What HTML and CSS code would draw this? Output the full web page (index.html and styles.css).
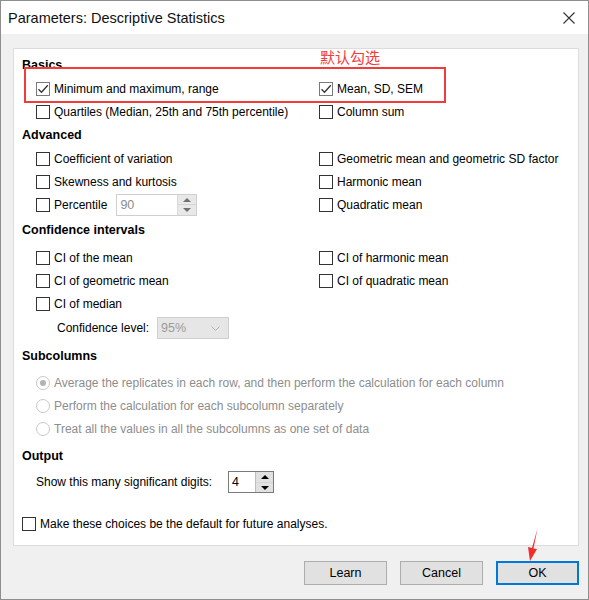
FILE: index.html
```html
<!DOCTYPE html>
<html>
<head>
<meta charset="utf-8">
<link rel="stylesheet" href="styles.css">
</head>
<body>
<div class="window">
  <div class="titlebar">
    <span class="title">Parameters: Descriptive Statistics</span>
    <svg class="close" width="12" height="12" viewBox="0 0 12 12"><path d="M0.5 0.5 L11.5 11.5 M11.5 0.5 L0.5 11.5" stroke="#333" stroke-width="1.1" fill="none"/></svg>
  </div>
  <div class="body">
    <div class="panel">
      <div class="heading h-basics">Basics</div>
      <div class="grid">
        <label class="row"><span class="cb checked"><svg width="12" height="12" viewBox="0 0 12 12"><path d="M1.5 6.2 L4.5 9.2 L10.8 2.2" stroke="#333" stroke-width="1.3" fill="none"/></svg></span>Minimum and maximum, range</label>
        <label class="row"><span class="cb checked"><svg width="12" height="12" viewBox="0 0 12 12"><path d="M1.5 6.2 L4.5 9.2 L10.8 2.2" stroke="#333" stroke-width="1.3" fill="none"/></svg></span>Mean, SD, SEM</label>
        <label class="row"><span class="cb"></span>Quartiles (Median, 25th and 75th percentile)</label>
        <label class="row"><span class="cb"></span>Column sum</label>
      </div>
      <div class="heading">Advanced</div>
      <div class="grid">
        <label class="row"><span class="cb"></span>Coefficient of variation</label>
        <label class="row"><span class="cb"></span>Geometric mean and geometric SD factor</label>
        <label class="row"><span class="cb"></span>Skewness and kurtosis</label>
        <label class="row"><span class="cb"></span>Harmonic mean</label>
        <div class="row"><span class="cb"></span>Percentile
          <div class="spin spin-pct disabled"><span class="val">90</span><span class="arrows"><span class="up"></span><span class="down"></span></span></div>
        </div>
        <label class="row"><span class="cb"></span>Quadratic mean</label>
      </div>
      <div class="heading h-ci">Confidence intervals</div>
      <div class="grid g-ci">
        <label class="row"><span class="cb"></span>CI of the mean</label>
        <label class="row"><span class="cb"></span>CI of harmonic mean</label>
        <label class="row"><span class="cb"></span>CI of geometric mean</label>
        <label class="row"><span class="cb"></span>CI of quadratic mean</label>
        <label class="row"><span class="cb"></span>CI of median</label>
        <div></div>
      </div>
      <div class="conf-row">
        <span>Confidence level:</span>
        <div class="select"><span>95%</span><svg width="9" height="5" viewBox="0 0 9 5"><path d="M0.5 0.5 L4.5 4.5 L8.5 0.5" stroke="#b5b5b5" fill="none"/></svg></div>
      </div>
      <div class="heading h-sub">Subcolumns</div>
      <div class="radios">
        <div class="row dim"><span class="rb on"></span>Average the replicates in each row, and then perform the calculation for each column</div>
        <div class="row dim"><span class="rb"></span>Perform the calculation for each subcolumn separately</div>
        <div class="row dim"><span class="rb"></span>Treat all the values in all the subcolumns as one set of data</div>
      </div>
      <div class="heading h-out">Output</div>
      <div class="digits-row">
        <span>Show this many significant digits:</span>
        <div class="spin spin-dig"><span class="val">4</span><span class="arrows"><span class="up"></span><span class="down"></span></span></div>
      </div>
      <label class="row default-row"><span class="cb"></span>Make these choices be the default for future analyses.</label>
    </div>
    <div class="buttons">
      <button class="btn">Learn</button>
      <button class="btn">Cancel</button>
      <button class="btn default">OK</button>
    </div>
  </div>
  <div class="annot-box"></div>
  <div class="annot-text">默认勾选</div>
  <svg class="annot-arrow" width="30" height="40" viewBox="0 0 30 40"><path d="M18.5 0.5 L13 20 L9 19 L11 33 L18 21 L14.5 20.5 Z" fill="#f02c2c"/></svg>
</div>
</body>
</html>
```
FILE: styles.css
```css
* { box-sizing: border-box; }
html, body { margin: 0; padding: 0; background: #fff; }
body {
  font-family: "Liberation Sans", Arial, sans-serif;
  font-size: 12px;
  color: #000;
}
.window {
  position: relative;
  width: 589px;
  height: 600px;
  border: 1px solid #8e8e8e;
  background: #f0f0f0;
}
.titlebar {
  height: 33px;
  background: #fff;
  display: flex;
  align-items: center;
  justify-content: space-between;
  padding: 0 13px 0 7px;
}
.title { font-size: 14.5px; color: #111; }
.close { display: block; }
.body { padding: 14px 9px 0 12px; }
.panel {
  height: 498px;
  background: #fff;
  border: 1px solid #dcdcdc;
  padding: 4px 0 0 8px;
}
.heading {
  font-weight: bold;
  font-size: 12.5px;
  height: 24px;
  line-height: 24px;
}
.h-ci { margin-top: 2px; }
.h-sub { margin-top: 3px; }
.h-out { margin-top: 4px; }
.grid {
  display: grid;
  grid-template-columns: 283px 1fr;
  padding-left: 14px;
}
.g-ci { margin-top: 4px; }
.row {
  height: 23px;
  display: flex;
  align-items: center;
  white-space: nowrap;
}
.cb {
  width: 14px;
  height: 14px;
  border: 1px solid #333;
  background: #fff;
  margin-right: 4px;
  flex: none;
  display: flex;
  align-items: center;
  justify-content: center;
}
.cb.checked { border-color: #7a7a7a; }
.spin {
  display: flex;
  height: 22px;
  border: 1px solid #cfcfcf;
  background: #fff;
}
.spin .val { flex: 1; padding-left: 3px; line-height: 20px; font-size: 12.5px; }
.spin .arrows {
  width: 19px;
  display: flex;
  flex-direction: column;
  border-left: 1px solid #dadada;
  background: #e8e8e8;
}
.spin .up, .spin .down {
  flex: 1;
  position: relative;
}
.spin .up { border-bottom: 1px solid #d4d4d4; }
.spin .up::after, .spin .down::after {
  content: "";
  position: absolute;
  left: 5px;
  border-left: 4px solid transparent;
  border-right: 4px solid transparent;
}
.spin .up::after { top: 3px; border-bottom: 4px solid #555; }
.spin .down::after { top: 3px; border-top: 4px solid #555; }
.spin-pct { width: 81px; margin-left: 9px; }
.spin-pct .val { color: #8c8c8c; }
.spin-pct .up::after { border-bottom-color: #707070; }
.spin-pct .down::after { border-top-color: #707070; }
.conf-row {
  height: 26px;
  display: flex;
  align-items: center;
  padding-left: 35px;
}
.select {
  width: 72px;
  height: 22px;
  margin-left: 8px;
  background: #e6e6e6;
  border: 1px solid #d0d0d0;
  color: #9a9a9a;
  font-size: 12.5px;
  display: flex;
  align-items: center;
  justify-content: space-between;
  padding: 0 8px 0 3px;
}
.radios { padding-left: 14px; }
.radios .row { height: 23px; }
.radios .row:first-child { margin-top: 3px; }
.dim { color: #8d8d8d; }
.rb {
  width: 14px;
  height: 14px;
  border-radius: 50%;
  border: 1px solid #c8c8c8;
  margin-right: 4px;
  flex: none;
  display: flex;
  align-items: center;
  justify-content: center;
}
.rb.on::after {
  content: "";
  width: 6px;
  height: 6px;
  border-radius: 50%;
  background: #b3b3b3;
}
.digits-row {
  margin-top: 2px;
  height: 24px;
  display: flex;
  align-items: center;
  padding-left: 14px;
}
.spin-dig {
  width: 46px;
  margin-left: 16px;
  border-color: #7a7a7a;
}
.spin-dig .arrows { background: #e1e1e1; border-left-color: #bdbdbd; width: 18px; }
.spin-dig .up::after { border-bottom-color: #000; }
.spin-dig .down::after { border-top-color: #000; }
.default-row { margin-top: 18px; }
.buttons {
  display: flex;
  justify-content: flex-end;
  gap: 13px;
  margin-top: 15px;
}
.btn {
  width: 83px;
  height: 24px;
  font-family: "Liberation Sans", Arial, sans-serif;
  font-size: 12.5px;
  background: #e1e1e1;
  border: 1px solid #adadad;
  color: #000;
  padding: 0;
}
.btn.default {
  border: 1px solid #0078d7;
  box-shadow: inset 0 0 0 1px #0078d7;
}
.annot-box {
  position: absolute;
  left: 23px;
  top: 66px;
  width: 422px;
  height: 36px;
  border: 2px solid #f23c3c;
}
.annot-text {
  position: absolute;
  left: 319px;
  top: 46px;
  font-family: "Noto Sans CJK SC", sans-serif;
  font-size: 15px;
  line-height: 20px;
  color: #f23c3c;
}
.annot-arrow {
  position: absolute;
  left: 518px;
  top: 527px;
}
```
